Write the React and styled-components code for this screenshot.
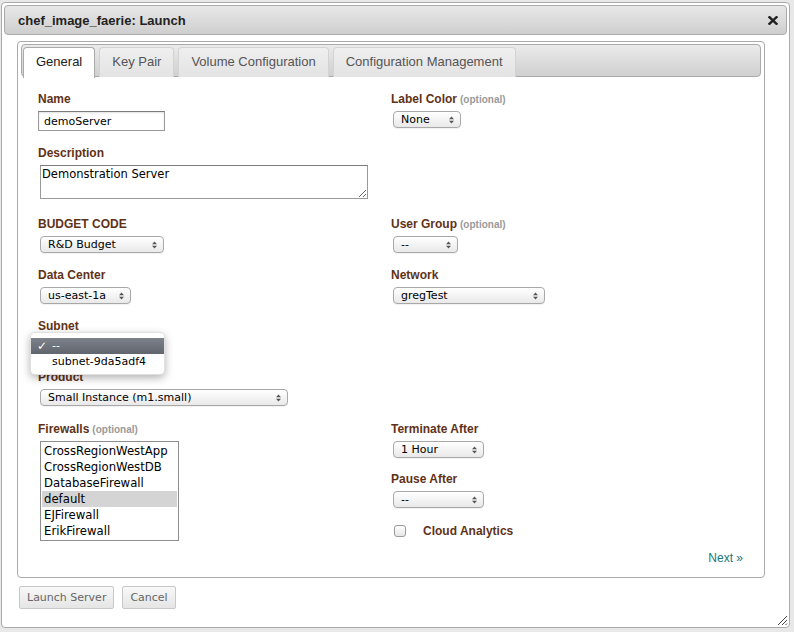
import React from 'react';
import styled, { createGlobalStyle } from 'styled-components';

const GlobalStyle = createGlobalStyle`
  body {
    margin: 0;
    background: #e8e8e8;
    font-family: "Liberation Sans", Arial, sans-serif;
  }
`;

const BROWN = '#5f3218';
const UI_FONT = '"DejaVu Sans", "Liberation Sans", sans-serif';

const Page = styled.div`
  padding: 2px 0 0 1px;
`;

const Dialog = styled.div`
  position: relative;
  box-sizing: border-box;
  width: 789px;
  height: 626px;
  padding: 2px;
  border: 1px solid #aaa;
  border-radius: 4px;
  background: #fff;
`;

const TitleBar = styled.div`
  box-sizing: border-box;
  height: 30px;
  display: flex;
  align-items: center;
  justify-content: space-between;
  padding: 0 8px 0 13px;
  border: 1px solid #aaa;
  border-radius: 4px;
  background: linear-gradient(to bottom, #e7e7e7 0%, #d9d9d9 60%, #cecece 100%);
`;

const Title = styled.span`
  font-size: 13px;
  font-weight: bold;
  color: #222;
`;

const CloseIcon = styled.svg`
  display: block;
  margin-top: 1px;
`;

const Content = styled.div`
  padding: 6px 22px 0 13px;
`;

const TabPanel = styled.div`
  box-sizing: border-box;
  height: 537px;
  display: flex;
  flex-direction: column;
  padding: 2px 3px;
  border: 1px solid #aaa;
  border-radius: 4px;
`;

const TabNav = styled.div`
  box-sizing: border-box;
  height: 33px;
  display: flex;
  align-items: flex-start;
  gap: 4px;
  padding: 2px 0 0 1px;
  border: 1px solid #aaa;
  border-radius: 4px;
  background: linear-gradient(to bottom, #ebebeb 0%, #dadada 60%, #d0d0d0 100%);
`;

const Tab = styled.div`
  position: relative;
  box-sizing: border-box;
  height: ${(p) => (p.$active ? '31px' : '30px')};
  padding: 0 12px;
  line-height: 28px;
  font-size: 13px;
  color: ${(p) => (p.$active ? '#212121' : '#555')};
  border: 1px solid ${(p) => (p.$active ? '#aaa' : '#d3d3d3')};
  border-bottom: 0;
  border-radius: 4px 4px 0 0;
  background: ${(p) => (p.$active ? '#fff' : 'linear-gradient(to bottom, #efefef, #e3e3e3)')};
`;

const Body = styled.div`
  flex: 1;
  display: flex;
  flex-direction: column;
  padding: 15px 18px 9px 17px;
`;

const Row = styled.div`
  display: grid;
  grid-template-columns: 353px 1fr;
  align-items: start;
  margin-bottom: ${(p) => p.$mb ?? 15}px;
`;

const Field = styled.div`
  position: relative;
  margin-bottom: ${(p) => p.$mb ?? 0}px;
`;

const Label = styled.label`
  display: block;
  height: 15px;
  margin-bottom: 4px;
  font-size: 12px;
  line-height: 15px;
  font-weight: bold;
  color: ${BROWN};
`;

const Optional = styled.span`
  margin-left: 3px;
  font-size: 10px;
  font-weight: bold;
  color: #9a9a9a;
`;

const TextInput = styled.input`
  display: block;
  box-sizing: border-box;
  width: 127px;
  height: 20px;
  margin: 0;
  padding: 0 5px;
  border: 1px solid #9a9a9a;
  border-top-color: #7c7c7c;
  box-shadow: inset 0 1px 2px rgba(0, 0, 0, 0.12);
  font: 11px ${UI_FONT};
  color: #000;
  outline: none;
`;

const TextArea = styled.textarea`
  display: block;
  box-sizing: border-box;
  width: 328px;
  height: 34px;
  margin: 0 0 0 2px;
  padding: 2px 1px;
  border: 1px solid #9a9a9a;
  border-top-color: #7c7c7c;
  font: 11.5px/13px ${UI_FONT};
  color: #000;
  outline: none;
`;

const SelectBox = styled.div`
  box-sizing: border-box;
  width: ${(p) => p.$w}px;
  height: 17px;
  margin: 1px 0 0 2px;
  display: flex;
  align-items: center;
  justify-content: space-between;
  padding: 0 6px 0 7px;
  border: 1px solid #a8a8a8;
  border-radius: 4px;
  background: linear-gradient(to bottom, #ffffff 0%, #f4f4f4 50%, #e9e9e9 100%);
  box-shadow: 0 1px 0 rgba(0, 0, 0, 0.05);
  font: 11px ${UI_FONT};
  color: #000;
  white-space: nowrap;
`;

const Arrows = () => (
  <svg width="5" height="8" viewBox="0 0 5 8">
    <path d="M0 3.3 L2.5 0.5 L5 3.3 Z M0 4.7 L2.5 7.5 L5 4.7 Z" fill="#555" />
  </svg>
);

const Select = ({ w, children }) => (
  <SelectBox $w={w}>
    <span>{children}</span>
    <Arrows />
  </SelectBox>
);

const SelectSpace = styled.div`
  height: 18px;
`;

const Popup = styled.div`
  position: absolute;
  z-index: 2;
  top: 13px;
  left: -8px;
  box-sizing: border-box;
  width: 135px;
  padding: 5px 0 4px;
  border: 1px solid rgba(0, 0, 0, 0.12);
  border-radius: 5px;
  background: #fff;
  box-shadow: 0 3px 9px rgba(0, 0, 0, 0.3);
`;

const Option = styled.div`
  display: flex;
  height: 16px;
  padding-left: 6px;
  font: 11px/16px ${UI_FONT};
  color: ${(p) => (p.$hl ? '#fff' : '#000')};
  background: ${(p) => (p.$hl ? 'linear-gradient(to bottom, #7d8189, #61656d)' : 'transparent')};
`;

const Check = styled.span`
  width: 15px;
  font-size: 12px;
  font-weight: bold;
`;

const ListBox = styled.div`
  box-sizing: border-box;
  width: 139px;
  height: 100px;
  margin-left: 2px;
  padding: 1px;
  border: 1px solid #8e8e8e;
  font: 11.7px/16px ${UI_FONT};
  color: #000;
  white-space: nowrap;
  overflow: hidden;
`;

const ListItem = styled.div`
  padding-left: 2px;
  background: ${(p) => (p.$selected ? '#d4d4d4' : 'transparent')};
`;

const CheckRow = styled.div`
  display: flex;
  align-items: center;
  height: 12px;
`;

const CheckBox = styled.span`
  box-sizing: border-box;
  width: 12px;
  height: 12px;
  margin-left: 3px;
  border: 1px solid #9a9a9a;
  border-radius: 3px;
  background: linear-gradient(to bottom, #fff, #e6e6e6);
`;

const CheckLabel = styled.span`
  margin-left: 17px;
  font-size: 12px;
  font-weight: bold;
  color: ${BROWN};
`;

const NextRow = styled.div`
  margin-top: auto;
  text-align: right;
  font-size: 12px;
  line-height: 16px;
  color: #22777a;
`;

const Footer = styled.div`
  display: flex;
  gap: 8px;
  margin-top: 8px;
  padding-left: 2px;
`;

const Button = styled.div`
  box-sizing: border-box;
  height: 23px;
  padding: 0 7px;
  border: 1px solid #c8c8c8;
  border-radius: 2px;
  background: linear-gradient(to bottom, #f8f8f8, #e5e5e5);
  font: 11px/21px ${UI_FONT};
  color: #666;
`;

const Grip = styled.svg`
  position: absolute;
  right: 1px;
  bottom: 1px;
`;

const tabs = ['General', 'Key Pair', 'Volume Configuration', 'Configuration Management'];
const firewalls = ['CrossRegionWestApp', 'CrossRegionWestDB', 'DatabaseFirewall', 'default', 'EJFirewall', 'ErikFirewall'];

export default function App() {
  return (
    <Page>
      <GlobalStyle />
      <Dialog>
        <TitleBar>
          <Title>chef_image_faerie: Launch</Title>
          <CloseIcon width="10" height="9" viewBox="0 0 10 9">
            <path d="M1.5 1.2 L8.5 7.8 M8.5 1.2 L1.5 7.8" stroke="#222" strokeWidth="2.4" strokeLinecap="square" />
          </CloseIcon>
        </TitleBar>
        <Content>
          <TabPanel>
            <TabNav>
              {tabs.map((t, i) => (
                <Tab key={t} $active={i === 0}>{t}</Tab>
              ))}
            </TabNav>
            <Body>
              <Row $mb={15}>
                <Field>
                  <Label>Name</Label>
                  <TextInput defaultValue="demoServer" />
                </Field>
                <Field>
                  <Label>Label Color<Optional>(optional)</Optional></Label>
                  <Select w={68}>None</Select>
                </Field>
              </Row>
              <Row $mb={18}>
                <Field>
                  <Label>Description</Label>
                  <TextArea defaultValue="Demonstration Server" />
                </Field>
              </Row>
              <Row $mb={15}>
                <Field>
                  <Label>BUDGET CODE</Label>
                  <Select w={124}>R&amp;D Budget</Select>
                </Field>
                <Field>
                  <Label>User Group<Optional>(optional)</Optional></Label>
                  <Select w={65}>--</Select>
                </Field>
              </Row>
              <Row>
                <Field>
                  <Label>Data Center</Label>
                  <Select w={91}>us-east-1a</Select>
                </Field>
                <Field>
                  <Label>Network</Label>
                  <Select w={152}>gregTest</Select>
                </Field>
              </Row>
              <Row $mb={14}>
                <Field>
                  <Label>Subnet</Label>
                  <SelectSpace />
                  <Popup>
                    <Option $hl>
                      <Check>✓</Check>
                      <span>--</span>
                    </Option>
                    <Option>
                      <Check />
                      <span>subnet-9da5adf4</span>
                    </Option>
                  </Popup>
                </Field>
              </Row>
              <Row $mb={16}>
                <Field>
                  <Label>Product</Label>
                  <Select w={248}>Small Instance (m1.small)</Select>
                </Field>
              </Row>
              <Row $mb={0}>
                <Field>
                  <Label>Firewalls<Optional>(optional)</Optional></Label>
                  <ListBox>
                    {firewalls.map((f) => (
                      <ListItem key={f} $selected={f === 'default'}>{f}</ListItem>
                    ))}
                  </ListBox>
                </Field>
                <div>
                  <Field $mb={14}>
                    <Label>Terminate After</Label>
                    <Select w={91}>1 Hour</Select>
                  </Field>
                  <Field $mb={17}>
                    <Label>Pause After</Label>
                    <Select w={91}>--</Select>
                  </Field>
                  <CheckRow>
                    <CheckBox />
                    <CheckLabel>Cloud Analytics</CheckLabel>
                  </CheckRow>
                </div>
              </Row>
              <NextRow>Next »</NextRow>
            </Body>
          </TabPanel>
          <Footer>
            <Button>Launch Server</Button>
            <Button>Cancel</Button>
          </Footer>
        </Content>
        <Grip width="12" height="12" viewBox="0 0 12 12">
          <path d="M11 2 L2 11 M11 6 L6 11 M11 9.5 L9.5 11" stroke="#444" strokeWidth="1" />
        </Grip>
      </Dialog>
    </Page>
  );
}
